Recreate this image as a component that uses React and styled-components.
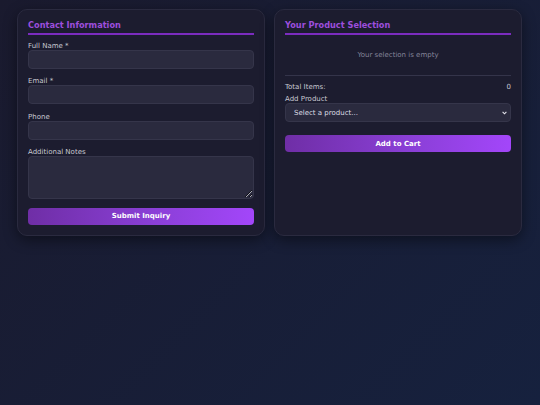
import React from "react";
import styled, { createGlobalStyle } from "styled-components";

const GlobalStyle = createGlobalStyle`
  html, body {
    margin: 0;
    padding: 0;
  }
  body {
    min-height: 100vh;
    background: linear-gradient(135deg, #1a1a2e 0%, #16213e 100%);
    font-family: "DejaVu Sans", Verdana, sans-serif;
    color: #d0d0da;
  }
`;

const Page = styled.main`
  display: grid;
  grid-template-columns: 1fr 1fr;
  gap: 9px;
  padding: 9px 18px 0 17px;
`;

const Card = styled.section`
  background: #1c1c2f;
  border: 1px solid #2a2a3f;
  border-radius: 10px;
  padding: 10px 10px 10px;
  box-shadow: 0 4px 14px rgba(0, 0, 0, 0.45);
`;

const Title = styled.h2`
  margin: 0 0 7.3px;
  padding-bottom: 2.6px;
  border-bottom: 2px solid #7b2cbf;
  color: #9d4edd;
  font-size: 8.2px;
  font-weight: bold;
  line-height: normal;
`;

const Group = styled.div`
  margin-bottom: 8.5px;
`;

const Label = styled.label`
  display: block;
  font-size: 7px;
  color: #c8c8d2;
  line-height: normal;
`;

const Field = styled.input`
  display: block;
  box-sizing: border-box;
  width: 100%;
  height: ${(p) => p.$h || 19}px;
  margin: 0;
  padding: 0 8px;
  background: #2a2a3e;
  border: 1px solid #35354a;
  border-radius: 4px;
  color: #ddd;
  font-family: inherit;
  font-size: 7px;
  outline: none;
`;

const Notes = styled(Field).attrs({ as: "textarea" })`
  padding: 6px 8px;
  resize: vertical;
  color-scheme: dark;
`;

const SelectWrap = styled.div`
  position: relative;
`;

const Select = styled.select`
  display: block;
  box-sizing: border-box;
  width: 100%;
  height: 19px;
  margin: 0;
  padding: 0 16px 0 8px;
  appearance: none;
  background: #2a2a3e;
  border: 1px solid #35354a;
  border-radius: 4px;
  color: #dcdce4;
  font-family: inherit;
  font-size: 7px;
  outline: none;
`;

const Chevron = styled.svg`
  position: absolute;
  right: 4px;
  top: 50%;
  width: 5px;
  height: 4px;
  margin-top: -2px;
  pointer-events: none;
`;

const Button = styled.button`
  display: block;
  width: 100%;
  height: 17px;
  margin-top: ${(p) => p.$top || 0}px;
  padding: 0;
  border: none;
  border-radius: 4px;
  background: linear-gradient(90deg, #6f2ea6 0%, #8a3fd6 55%, #a346fa 100%);
  color: #fff;
  font-family: inherit;
  font-size: 7px;
  font-weight: bold;
  cursor: pointer;
`;

const Empty = styled.div`
  padding: 9.2px 0 8px;
  margin-bottom: 8px;
  text-align: center;
  font-size: 7px;
  color: #85859a;
  line-height: normal;
`;

const Totals = styled.div`
  border-top: 1px solid #34344a;
  padding-top: 7px;
`;

const Row = styled.div`
  display: flex;
  justify-content: space-between;
  margin-bottom: 4px;
  font-size: 7px;
  color: #c8c8d2;
  line-height: normal;
`;

export default function App() {
  return (
    <>
      <GlobalStyle />
      <Page>
        <Card>
          <Title>Contact Information</Title>
          <Group>
            <Label>Full Name *</Label>
            <Field type="text" />
          </Group>
          <Group>
            <Label>Email *</Label>
            <Field type="email" />
          </Group>
          <Group>
            <Label>Phone</Label>
            <Field type="tel" />
          </Group>
          <Group>
            <Label>Additional Notes</Label>
            <Notes $h={43} />
          </Group>
          <Button $top={2.5}>Submit Inquiry</Button>
        </Card>
        <Card>
          <Title>Your Product Selection</Title>
          <Empty>Your selection is empty</Empty>
          <Totals>
            <Row>
              <span>Total Items:</span>
              <span>0</span>
            </Row>
            <Label>Add Product</Label>
            <SelectWrap>
              <Select defaultValue="">
                <option value="">Select a product...</option>
              </Select>
              <Chevron viewBox="0 0 5 4">
                <path d="M0.6 0.8 L2.5 2.8 L4.4 0.8" fill="none" stroke="#e4e4ec" strokeWidth="1.1" />
              </Chevron>
            </SelectWrap>
            <Button $top={13}>Add to Cart</Button>
          </Totals>
        </Card>
      </Page>
    </>
  );
}
